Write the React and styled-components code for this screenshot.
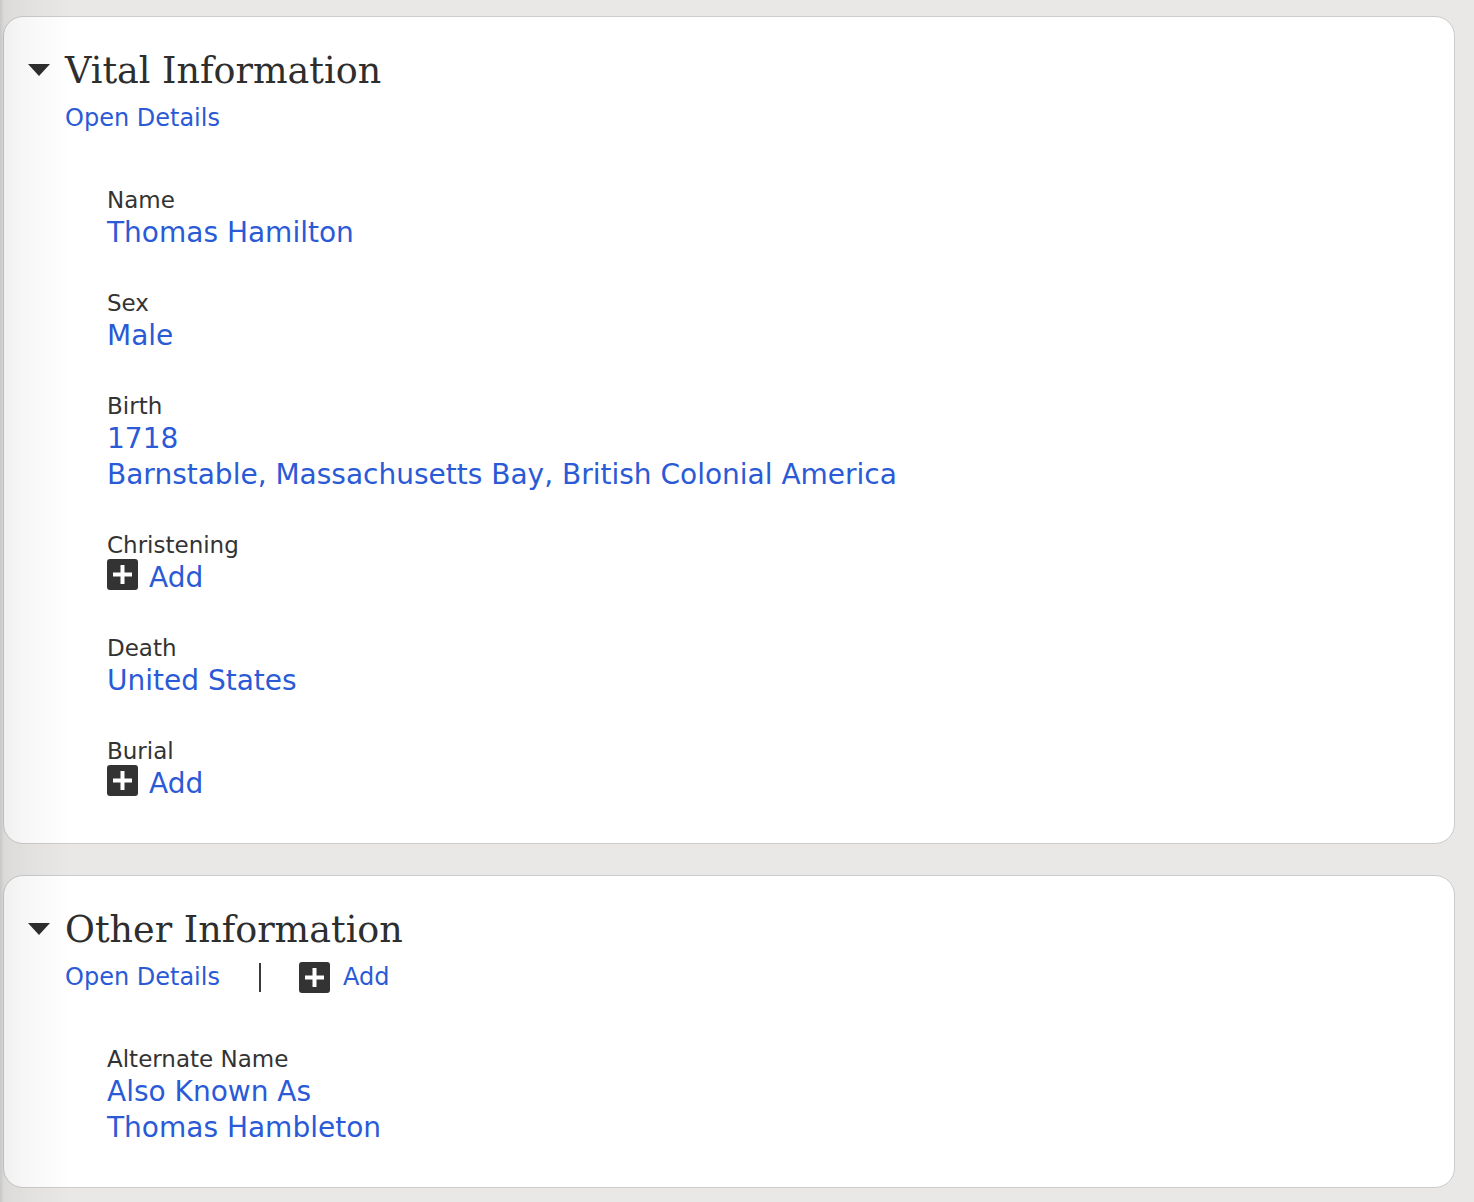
import React from "react";
import styled, { createGlobalStyle } from "styled-components";

const GlobalStyle = createGlobalStyle`
  html, body { margin: 0; padding: 0; }
  body {
    background: #e9e8e6;
    font-family: "DejaVu Sans", Verdana, sans-serif;
    color: #333;
    position: relative;
  }
  body::before {
    content: "";
    position: fixed;
    left: 0; top: 0; bottom: 0;
    width: 70px;
    background: linear-gradient(to right, rgba(0,0,0,0.14) 0, rgba(0,0,0,0.06) 4px, rgba(0,0,0,0.03) 25px, rgba(0,0,0,0) 70px);
    pointer-events: none;
    z-index: 2;
  }
`;

const Page = styled.div`
  display: flex;
  flex-direction: column;
  gap: 31px;
  padding: 16px 19px 15px 3px;
`;

const Card = styled.section`
  background: #fff;
  border: 1px solid #cbcbcb;
  border-radius: 20px;
  padding: 34px 24px 41px 24px;
`;

const HeadingRow = styled.div`
  display: flex;
  align-items: center;
  gap: 15px;
`;

const Caret = styled.span`
  width: 0;
  height: 0;
  border-left: 11.5px solid transparent;
  border-right: 11.5px solid transparent;
  border-top: 12px solid #2e2e2e;
  margin-top: -3px;
`;

const Heading = styled.h2`
  margin: 0;
  font-family: "DejaVu Serif", "Liberation Serif", serif;
  font-weight: normal;
  font-size: 36.5px;
  line-height: 40px;
  color: #2e2e2e;
`;

const Actions = styled.div`
  display: flex;
  align-items: center;
  margin-top: 11px;
  padding-left: 37px;
`;

const Link = styled.a`
  color: #2a5ad6;
  text-decoration: none;
  font-size: ${(p) => (p.$small ? "24px" : "28px")};
  line-height: ${(p) => (p.$small ? "32px" : "36px")};
  display: block;
`;

const Divider = styled.span`
  width: 2px;
  height: 29px;
  background: #3a3a3a;
  margin: 0 38px 0 39px;
`;

const AddRow = styled.div`
  display: flex;
  align-items: ${(p) => (p.$small ? "center" : "flex-start")};
  gap: ${(p) => (p.$small ? "13px" : "11px")};
  & > svg {
    margin-top: ${(p) => (p.$small ? "0" : "-1px")};
  }
`;

const Fields = styled.div`
  display: flex;
  flex-direction: column;
  gap: 37px;
  padding-left: 79px;
  margin-top: ${(p) => p.$top || 51}px;
`;

const Field = styled.div`
  display: flex;
  flex-direction: column;
`;

const Label = styled.div`
  font-size: 23px;
  line-height: 30px;
  color: #333;
`;

const PlusIcon = ({ size = 31 }) => (
  <svg width={size} height={size} viewBox="0 0 31 31" aria-hidden="true">
    <rect x="0" y="0" width="31" height="31" rx="3" fill="#333" />
    <rect x="13.5" y="6" width="4" height="19" fill="#fff" />
    <rect x="6" y="13.5" width="19" height="4" fill="#fff" />
  </svg>
);

const Add = ({ small }) => (
  <AddRow $small={small}>
    <PlusIcon />
    <Link href="#" $small={small}>Add</Link>
  </AddRow>
);

const vital = [
  { label: "Name", values: ["Thomas Hamilton"] },
  { label: "Sex", values: ["Male"] },
  { label: "Birth", values: ["1718", "Barnstable, Massachusetts Bay, British Colonial America"] },
  { label: "Christening", add: true },
  { label: "Death", values: ["United States"] },
  { label: "Burial", add: true },
];

const FieldBlock = ({ f }) => (
  <Field>
    <Label>{f.label}</Label>
    {f.add ? <Add /> : f.values.map((v) => <Link href="#" key={v}>{v}</Link>)}
  </Field>
);

export default function App() {
  return (
    <>
      <GlobalStyle />
      <Page>
        <Card>
          <HeadingRow>
            <Caret />
            <Heading>Vital Information</Heading>
          </HeadingRow>
          <Actions>
            <Link href="#" $small>Open Details</Link>
          </Actions>
          <Fields>
            {vital.map((f) => (
              <FieldBlock key={f.label} f={f} />
            ))}
          </Fields>
        </Card>
        <Card>
          <HeadingRow>
            <Caret />
            <Heading>Other Information</Heading>
          </HeadingRow>
          <Actions>
            <Link href="#" $small>Open Details</Link>
            <Divider />
            <Add small />
          </Actions>
          <Fields $top={51}>
            <FieldBlock f={{ label: "Alternate Name", values: ["Also Known As", "Thomas Hambleton"] }} />
          </Fields>
        </Card>
      </Page>
    </>
  );
}
